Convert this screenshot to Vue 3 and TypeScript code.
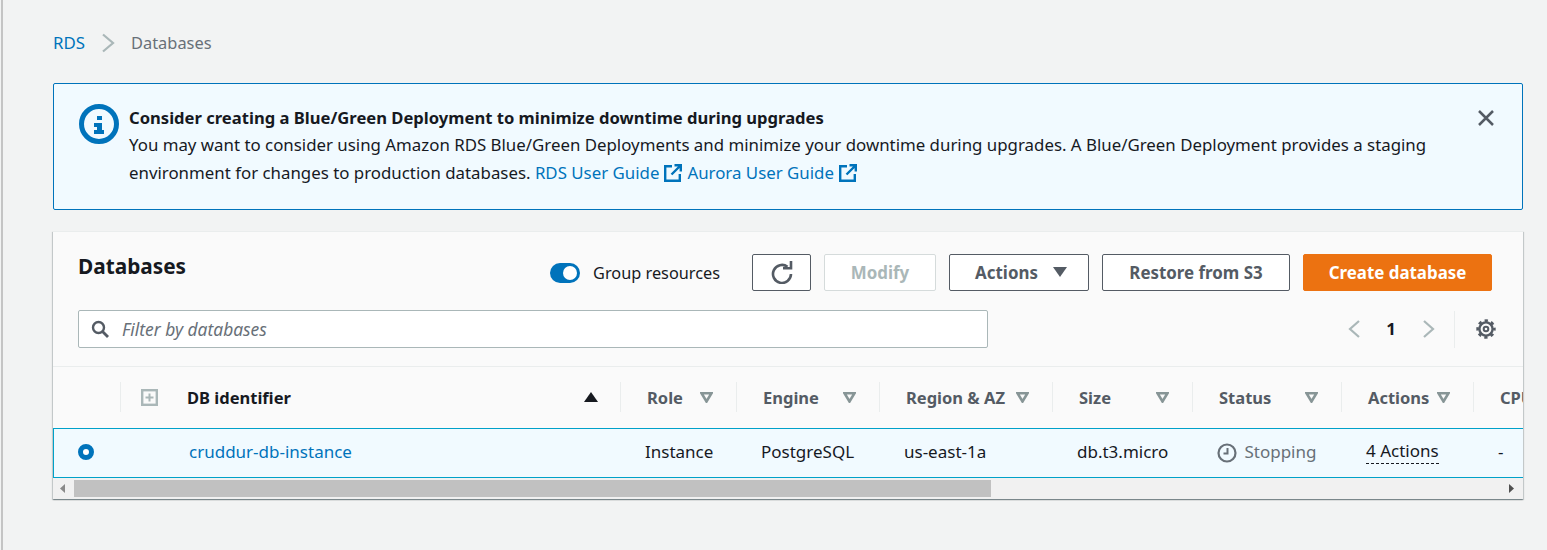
<template>
  <div class="page">
    <nav class="crumbs">
      <a class="link">RDS</a>
      <svg class="crumb-sep" width="14" height="20" viewBox="0 0 14 20"><path d="M2 1.500 12 10 2 18.500" fill="none" stroke="#aab7b8" stroke-width="2.200" /></svg>
      <span class="crumb-current">Databases</span>
    </nav>

    <section class="flash">
      <svg class="flash-icon" width="40" height="40" viewBox="0 0 40 40">
        <circle cx="20" cy="20" r="17.500" fill="none" stroke="#0073bb" stroke-width="5" />
        <rect x="18" y="12" width="5" height="4" fill="#0073bb" />
        <path d="M15 19h8v7h2v4H15v-4h3v-3h-3z" fill="#0073bb" />
      </svg>
      <div class="flash-body">
        <h3>Consider creating a Blue/Green Deployment to minimize downtime during upgrades</h3>
        <p>
          You may want to consider using Amazon RDS Blue/Green Deployments and minimize your downtime during upgrades. A Blue/Green Deployment provides a staging
          environment for changes to production databases.
          <a class="link">RDS User Guide<svg class="ext" width="18" height="18" viewBox="0 0 18 18"><path d="M8 2.200H1.200v14.600h14.600V10M10.500 1.200h6.300v6.300M16.500 1.500 7.500 10.500" fill="none" stroke="#0073bb" stroke-width="2.400" /></svg></a>
          <a class="link">Aurora User Guide<svg class="ext" width="18" height="18" viewBox="0 0 18 18"><path d="M8 2.200H1.200v14.600h14.600V10M10.500 1.200h6.300v6.300M16.500 1.500 7.500 10.500" fill="none" stroke="#0073bb" stroke-width="2.400" /></svg></a>
        </p>
      </div>
      <svg class="flash-close" width="18" height="18" viewBox="0 0 18 18"><path d="M2 2l14 14M16 2 2 16" fill="none" stroke="#545b64" stroke-width="2.500" /></svg>
    </section>

    <section class="panel">
      <header class="panel-head">
        <div class="head-row">
          <h2>Databases</h2>
          <div class="actions">
            <label class="toggle-wrap">
              <span class="toggle"><span class="knob"></span></span>
              <span>Group resources</span>
            </label>
            <button class="btn refresh">
              <svg width="22" height="24" viewBox="0 0 22 24">
                <path d="M16.500 6.800A9 9 0 1 0 20 14" fill="none" stroke="#545b64" stroke-width="2.600" />
                <path d="M12 8.200h8V1" fill="none" stroke="#545b64" stroke-width="2.600" />
              </svg>
            </button>
            <button class="btn disabled">Modify</button>
            <button class="btn actions-btn">Actions<svg width="14" height="10" viewBox="0 0 14 10"><path d="M0 0h14L7 10z" fill="#545b64" /></svg></button>
            <button class="btn restore">Restore from S3</button>
            <button class="btn primary">Create database</button>
          </div>
        </div>
        <div class="filter-row">
          <div class="filter">
            <svg width="18" height="18" viewBox="0 0 18 18"><circle cx="7.500" cy="7.500" r="5.500" fill="none" stroke="#545b64" stroke-width="2.400" /><path d="M11.500 11.500 17 17" stroke="#545b64" stroke-width="2.800" /></svg>
            <span>Filter by databases</span>
          </div>
          <div class="pager">
            <svg width="14" height="20" viewBox="0 0 14 20"><path d="M12 2 3 10l9 8" fill="none" stroke="#aab7b8" stroke-width="2.200" /></svg>
            <b>1</b>
            <svg width="14" height="20" viewBox="0 0 14 20"><path d="M2 2l9 8-9 8" fill="none" stroke="#aab7b8" stroke-width="2.200" /></svg>
            <span class="pager-sep"></span>
            <svg class="gear" width="20" height="20" viewBox="0 0 20 20">
              <circle cx="10" cy="10" r="6.600" fill="none" stroke="#545b64" stroke-width="2.400" />
              <circle cx="10" cy="10" r="8.400" fill="none" stroke="#545b64" stroke-width="2.600" stroke-dasharray="3.300 3.297" stroke-dashoffset="1.650" />
              <circle cx="10" cy="10" r="2.300" fill="none" stroke="#545b64" stroke-width="2" />
            </svg>
          </div>
        </div>
      </header>

      <div class="table-clip">
        <table>
          <colgroup>
            <col v-for="(w, i) in colWidths" :key="i" :style="{ width: w + 'px' }" />
          </colgroup>
          <thead>
            <tr>
              <th class="radio-col"></th>
              <th class="id-col">
                <span class="cell-in">
                  <svg class="plus" width="17" height="17" viewBox="0 0 17 17"><rect x="1.200" y="1.200" width="14.600" height="14.600" fill="none" stroke="#aab7b8" stroke-width="2.400" /><path d="M8.500 4.500v8M4.500 8.500h8" stroke="#aab7b8" stroke-width="2" /></svg>
                  <span class="id-title">DB identifier</span>
                  <svg class="sort-up" width="14" height="10" viewBox="0 0 14 10"><path d="M7 0l7 10H0z" fill="#16191f" /></svg>
                </span>
              </th>
              <th v-for="c in columns" :key="c.label">
                <span class="cell-in">
                  <span>{{ c.label }}</span>
                  <svg v-if="c.sort" class="sort" width="13" height="11" viewBox="0 0 13 11"><path d="M1.500 1.200h10L6.500 9.500z" fill="none" stroke="#879596" stroke-width="2.600" /></svg>
                </span>
              </th>
            </tr>
          </thead>
          <tbody>
            <tr class="selected">
              <td class="radio-cell"><span class="radio"></span></td>
              <td class="name-cell"><a class="link">cruddur-db-instance</a></td>
              <td>Instance</td>
              <td>PostgreSQL</td>
              <td>us-east-1a</td>
              <td>db.t3.micro</td>
              <td class="status">
                <svg width="20" height="20" viewBox="0 0 20 20"><circle cx="10" cy="10" r="8.500" fill="none" stroke="#687078" stroke-width="2.200" /><path d="M10.500 5v5.500H6.500" fill="none" stroke="#687078" stroke-width="2" /></svg>
                Stopping
              </td>
              <td><span class="dashed">4 Actions</span></td>
              <td>-</td>
            </tr>
          </tbody>
        </table>
      </div>

      <div class="scrollbar">
        <svg width="6" height="9" viewBox="0 0 6 9"><path d="M5 0v9L0 4.500z" fill="#8a8a8a" /></svg>
        <div class="track"><div class="thumb"></div></div>
        <svg width="6" height="9" viewBox="0 0 6 9"><path d="M0 0v9l5-4.500z" fill="#505050" /></svg>
      </div>
    </section>
  </div>
</template>

<script setup lang="ts">
const colWidths = [67, 500, 116, 143, 173, 140, 149, 132, 120];

const columns = [
  { label: "Role", sort: true },
  { label: "Engine", sort: true },
  { label: "Region & AZ", sort: true },
  { label: "Size", sort: true },
  { label: "Status", sort: true },
  { label: "Actions", sort: true },
  { label: "CPU", sort: false },
];
</script>

<style>
html,
body {
  background: #f2f3f3;
}
</style>

<style scoped>
.page {
  box-sizing: border-box;
  height: 550px;
  overflow: hidden;
  margin-left: 1px;
  padding: 0 24px 0 50px;
  background: #f2f3f3;
  border-left: 2px solid #c4c4c4;
  font-family: "Noto Sans", "Open Sans", sans-serif;
  font-size: 16.85px;
  color: #16191f;
}

.link {
  color: #0073bb;
  text-decoration: none;
}

.crumbs {
  display: flex;
  align-items: center;
  height: 86px;
  padding-bottom: 1px;
  box-sizing: border-box;
}

.crumb-sep {
  margin: 0 16px 0 16px;
}

.crumb-current {
  color: #687078;
  font-size: 16.4px;
}

.flash {
  box-sizing: border-box;
  height: 127px;
  display: flex;
  background: #f1faff;
  border: 1px solid #0073bb;
  border-radius: 2px;
  padding: 20px 27px 0 25px;
  margin-top: -3px;
}

.flash-icon {
  flex: none;
  width: 40px;
  height: 40px;
  margin-right: 10px;
}

.flash-body {
  flex: 1;
  min-width: 0;
}

.flash-body h3 {
  margin: 0;
  font-size: 16.6px;
  font-weight: 700;
  line-height: 27px;
}

.flash-body p {
  margin: 0;
  line-height: 28px;
}

.ext {
  vertical-align: -3px;
  margin: 0 5px 0 5px;
}

.flash-close {
  flex: none;
  margin: 5px 0 0 20px;
}

.panel {
  margin-top: 21px;
  background: #fafafa;
  box-shadow: 0 1px 1px 0 rgba(0, 28, 36, 0.3), 1px 1px 1px 0 rgba(0, 28, 36, 0.15), -1px 1px 1px 0 rgba(0, 28, 36, 0.15);
  border-top: 1px solid #eaeded;
  overflow: hidden;
}

.panel-head {
  padding: 0 0 0 25px;
  border-bottom: 1px solid #eaeded;
  height: 135px;
  box-sizing: border-box;
}

.head-row {
  display: flex;
  justify-content: space-between;
  padding: 22px 31px 0 0;
  height: 78px;
  box-sizing: border-box;
}

.head-row h2 {
  margin: -2px 0 0;
  font-size: 20.8px;
  font-weight: 700;
  line-height: 28px;
}

.actions {
  display: flex;
  align-items: flex-start;
}

.toggle-wrap {
  display: flex;
  align-items: center;
  gap: 13px;
  height: 37px;
  margin-right: 31px;
  font-size: 16.3px;
}

.toggle {
  display: block;
  width: 30px;
  height: 20px;
  border-radius: 10px;
  background: #0073bb;
  position: relative;
}

.knob {
  position: absolute;
  right: 3px;
  top: 3px;
  width: 14px;
  height: 14px;
  border-radius: 50%;
  background: #fff;
}

.btn {
  box-sizing: border-box;
  height: 37px;
  margin: 0 0 0 13px;
  padding: 0 0 1px;
  font: 700 16.9px "Noto Sans", "Open Sans", sans-serif;
  border: 1px solid #545b64;
  border-radius: 2px;
  background: #fff;
  color: #545b64;
  display: flex;
  align-items: center;
  justify-content: center;
}

.refresh {
  width: 59px;
  margin-left: 1px;
}

.disabled {
  width: 112px;
  border-color: #d5dbdb;
  color: #aab7b8;
}

.actions-btn {
  width: 140px;
  gap: 15px;
  padding-left: 4px;
}

.restore {
  width: 188px;
}

.primary {
  width: 189px;
  background: #ec7211;
  border-color: #ec7211;
  color: #fff;
}

.filter-row {
  display: flex;
  justify-content: space-between;
  align-items: center;
}

.filter {
  box-sizing: border-box;
  width: 910px;
  height: 38px;
  display: flex;
  align-items: center;
  gap: 13px;
  padding: 0 12px;
  background: #fff;
  border: 1px solid #aab7b8;
  border-radius: 2px;
  font-style: italic;
  font-size: 17.4px;
  color: #687078;
}

.pager {
  display: flex;
  align-items: center;
  height: 38px;
  color: #16191f;
}

.pager b {
  margin: 0 26px 2px 25px;
  font-weight: 700;
}

.pager-sep {
  width: 1px;
  height: 37px;
  background: #eaeded;
  margin: 0 21px 0 18px;
}

.gear {
  margin-right: 27px;
}

.table-clip {
  overflow: hidden;
}

table {
  table-layout: fixed;
  width: 1540px;
  border-collapse: separate;
  border-spacing: 0;
}

th {
  box-sizing: border-box;
  height: 61px;
  padding: 0 0 1px;
  text-align: left;
  font-weight: 700;
  font-size: 16.5px;
  color: #545b64;
  position: relative;
}

th + th::before {
  content: "";
  position: absolute;
  left: 0;
  top: 15px;
  height: 30px;
  width: 1px;
  background: #eaeded;
}

.cell-in {
  display: flex;
  align-items: center;
  justify-content: space-between;
  padding: 0 23px 0 27px;
  white-space: nowrap;
}

.id-col .cell-in {
  justify-content: flex-start;
  padding: 0 22px 0 21px;
  color: #16191f;
}

.id-title {
  margin-left: 29px;
  flex: 1;
}

.selected td {
  box-sizing: border-box;
  height: 50px;
  padding: 0 0 3px 25px;
  background: #f1faff;
  border-top: 1px solid #00a1c9;
  border-bottom: 1px solid #00a1c9;
  white-space: nowrap;
  font-size: 17px;
}

.selected td.radio-cell {
  padding: 0 0 2px 24px;
  border-left: 1px solid #00a1c9;
}

.selected td.name-cell {
  padding-left: 69px;
}

.radio {
  display: block;
  box-sizing: border-box;
  width: 16px;
  height: 16px;
  border-radius: 50%;
  border: 5px solid #0073bb;
  background: #fff;
}

.status {
  color: #687078;
}

.status svg {
  vertical-align: -5px;
  margin-right: 3px;
}

.dashed {
  display: inline-block;
  line-height: 24px;
  border-bottom: 1px dashed #16191f;
}

.scrollbar {
  display: flex;
  align-items: center;
  height: 21px;
  padding: 0 8px 0 7px;
  background: #f1f1f1;
  gap: 8px;
}

.track {
  flex: 1;
  height: 17px;
}

.thumb {
  width: 917px;
  height: 17px;
  background: #c1c1c1;
}
</style>
